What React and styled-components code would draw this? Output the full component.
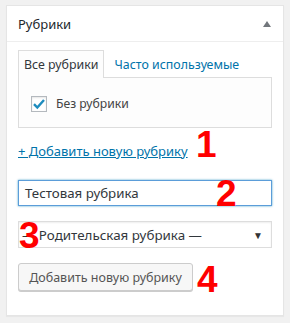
import React from 'react';
import styled, { createGlobalStyle } from 'styled-components';

const GlobalStyle = createGlobalStyle`
    html, body {
        margin: 0;
        padding: 0;
        background: #f1f1f1;
    }
    body {
        font-family: 'Noto Sans', 'Open Sans', sans-serif;
        font-size: 13px;
        color: #444;
    }
`;

const Page = styled.div`
    padding: 5px 6px 7px 6px;
    width: 290px;
    height: 323px;
    box-sizing: border-box;
`;

const Box = styled.div`
    background: #fff;
    border: 1px solid #e5e5e5;
    box-shadow: 0 1px 1px rgba(0, 0, 0, 0.04);
    height: 311px;
    box-sizing: border-box;
`;

const Header = styled.div`
    display: flex;
    align-items: center;
    justify-content: space-between;
    height: 35px;
    padding: 0 12px 0 11px;
    border-bottom: 1px solid #eee;
    h2 {
        margin: 0;
        font-size: 13px;
        font-weight: 400;
        color: #23282d;
    }
`;

const Toggle = styled.span`
    width: 0;
    height: 0;
    border-left: 4px solid transparent;
    border-right: 4px solid transparent;
    border-bottom: 6px solid #72777c;
    margin-top: 1px;
`;

const Inside = styled.div`
    padding: 8px 11px 0 11px;
    display: flex;
    flex-direction: column;
`;

const Tabs = styled.div`
    display: flex;
    height: 27px;
    font-size: 12.4px;
`;

const Tab = styled.div`
    box-sizing: border-box;
    height: ${(p) => (p.active ? '28px' : '27px')};
    padding: 0 5px;
    display: flex;
    align-items: center;
    border: 1px solid ${(p) => (p.active ? '#ddd' : 'transparent')};
    border-bottom: none;
    background: ${(p) => (p.active ? '#fdfdfd' : 'transparent')};
    color: ${(p) => (p.active ? '#32373c' : '#0073aa')};
    position: relative;
    z-index: 1;
    margin-right: 4px;
`;

const TabPanel = styled.div`
    box-sizing: border-box;
    height: 51px;
    border: 1px solid #ddd;
    background: #fdfdfd;
    display: flex;
    align-items: center;
    padding: 2px 12px 0 12px;
    font-size: 12px;
`;

const Check = styled.span`
    box-sizing: border-box;
    width: 16px;
    height: 16px;
    border: 1px solid #b4b9be;
    background: #fff;
    box-shadow: inset 0 1px 2px rgba(0, 0, 0, 0.1);
    display: flex;
    align-items: center;
    justify-content: center;
    margin-right: 9px;
`;

const Label = styled.span`
    color: #444;
    font-size: 12.2px;
`;

const Row = styled.div`
    position: relative;
    margin-top: ${(p) => p.top || 0}px;
`;

const AddLink = styled.a`
    color: #0073aa;
    text-decoration: underline;
    font-size: 13px;
    line-height: 18px;
    display: inline-block;
`;

const Mark = styled.span`
    position: absolute;
    left: ${(p) => p.x}px;
    top: ${(p) => p.y}px;
    font-family: 'Liberation Sans', Arial, sans-serif;
    font-weight: 700;
    font-size: 37px;
    line-height: 1;
    color: #ff0000;
    z-index: 2;
`;

const TextInput = styled.div`
    box-sizing: border-box;
    height: 26px;
    border: 1px solid #5b9dd9;
    box-shadow: 0 0 2px rgba(30, 140, 190, 0.8);
    padding: 0 6px;
    display: flex;
    align-items: center;
    font-size: 13.3px;
    color: #32373c;
`;

const Select = styled.div`
    box-sizing: border-box;
    height: 27px;
    border: 1px solid #ddd;
    box-shadow: inset 0 1px 2px rgba(0, 0, 0, 0.07);
    padding: 0 8px 0 3px;
    display: flex;
    align-items: center;
    justify-content: space-between;
    font-size: 13.4px;
    color: #32373c;
    span.arrow {
        font-size: 10px;
        color: #333;
    }
`;

const Button = styled.div`
    box-sizing: border-box;
    height: 28px;
    width: 175px;
    border: 1px solid #ccc;
    border-radius: 3px;
    background: #f7f7f7;
    box-shadow: 0 1px 0 #ccc;
    color: #555;
    display: flex;
    align-items: center;
    justify-content: center;
    font-size: 12.5px;
`;

const App = () => {
    return (
        <Page>
            <GlobalStyle />
            <Box>
                <Header>
                    <h2>Рубрики</h2>
                    <Toggle />
                </Header>
                <Inside>
                    <Tabs>
                        <Tab active>Все рубрики</Tab>
                        <Tab>Часто используемые</Tab>
                    </Tabs>
                    <TabPanel>
                        <Check>
                            <svg width="14" height="14" viewBox="0 0 14 14">
                                <path d="M2 7.2 L5.3 10.5 L12 3" fill="none" stroke="#1e8cbe" strokeWidth="2.4" />
                            </svg>
                        </Check>
                        <Label>Без рубрики</Label>
                    </TabPanel>
                    <Row top={14}>
                        <AddLink>+ Добавить новую рубрику</AddLink>
                        <Mark x={178} y={-16}>1</Mark>
                    </Row>
                    <Row top={20}>
                        <TextInput>Тестовая рубрика</TextInput>
                        <Mark x={198} y={-5}>2</Mark>
                    </Row>
                    <Row top={15}>
                        <Select>
                            <span>— Родительская рубрика —</span>
                            <span className="arrow">▼</span>
                        </Select>
                        <Mark x={1} y={-4}>3</Mark>
                    </Row>
                    <Row top={15}>
                        <Button>Добавить новую рубрику</Button>
                        <Mark x={179} y={-2}>4</Mark>
                    </Row>
                </Inside>
            </Box>
        </Page>
    );
};

export default App;
